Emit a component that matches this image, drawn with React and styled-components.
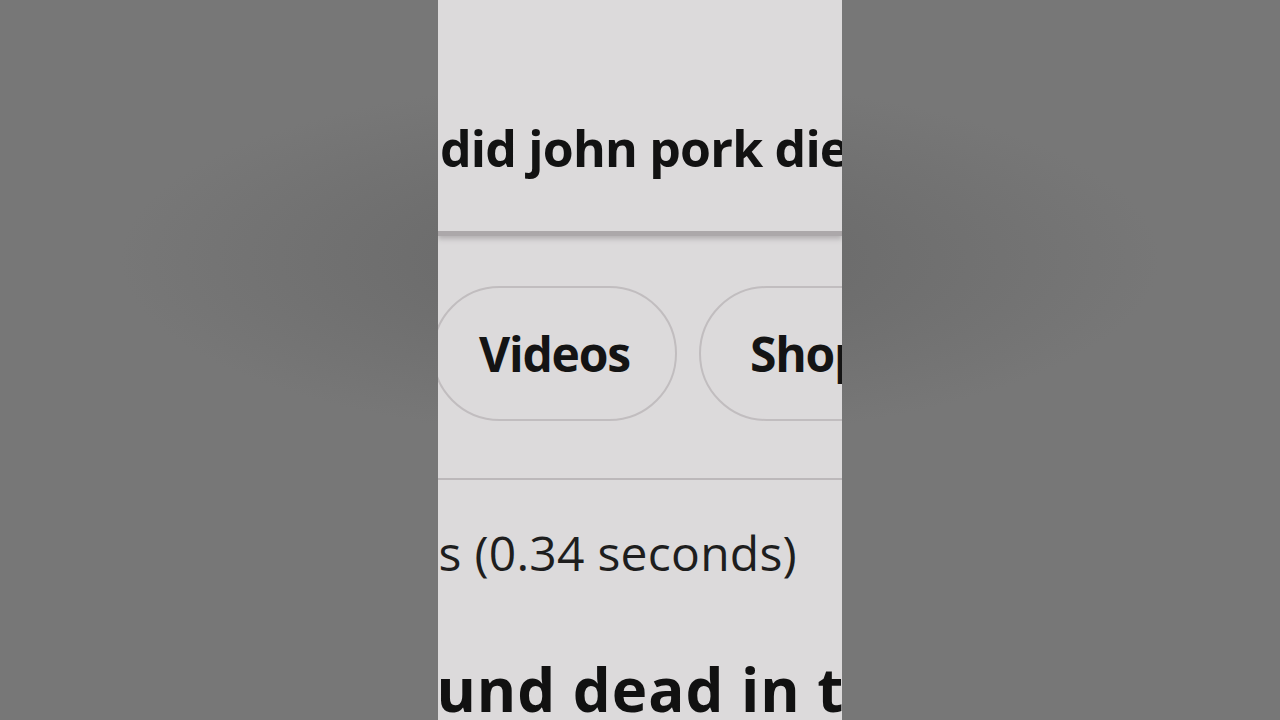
import styled, { createGlobalStyle } from "styled-components";

const GlobalStyle = createGlobalStyle`
  html, body {
    margin: 0;
    padding: 0;
    width: 100%;
    height: 100%;
    overflow: hidden;
  }
  body {
    font-family: "Open Sans", Lato, sans-serif;
  }
`;

const Stage = styled.div`
  width: 1280px;
  height: 720px;
  display: flex;
  justify-content: center;
  background: radial-gradient(
    ellipse 520px 180px at 50% 36%,
    #666667 0%,
    #6e6e6e 45%,
    #777777 100%
  );
`;

const Frame = styled.main`
  width: 404px;
  height: 720px;
  background: #dcdadb;
  overflow: hidden;
  display: flex;
  flex-direction: column;

  & > * {
    flex-shrink: 0;
  }
`;

const SearchBox = styled.div`
  height: 236px;
  padding: 116px 0 0 2px;
  box-sizing: border-box;
  border-bottom: 5px solid #aca8aa;
  box-shadow: 0 3px 5px rgba(120, 115, 118, 0.4);
`;

const Query = styled.h1`
  margin: 0;
  font-size: 50px;
  line-height: 64px;
  font-weight: 700;
  letter-spacing: -0.8px;
  color: #121212;
  white-space: nowrap;
`;

const ChipRow = styled.nav`
  display: flex;
  gap: 22px;
  padding: 50px 0 57px;
  margin-left: -6px;
  border-bottom: 2px solid #bcb8ba;
`;

const Chip = styled.div`
  flex-shrink: 0;
  height: 135px;
  box-sizing: border-box;
  border: 2px solid #c1bdbf;
  border-radius: 70px;
  display: flex;
  align-items: center;
  padding: 0 ${(p) => p.$pad}px;
  font-size: 48px;
  font-weight: 700;
  letter-spacing: -1.2px;
  color: #141414;
  white-space: nowrap;
`;

const Stats = styled.div`
  display: flex;
  justify-content: flex-end;
  padding: 45px 45px 0 0;
  font-size: 48px;
  line-height: 56px;
  font-weight: 500;
  letter-spacing: 0.25px;
  color: #1e1e1e;
  white-space: nowrap;
  overflow: hidden;
`;

const ResultTitle = styled.h2`
  margin: 72px 0 0 -64px;
  font-size: 60px;
  line-height: 72px;
  font-weight: 700;
  letter-spacing: 1px;
  color: #111111;
  white-space: nowrap;
`;

export default function App() {
  return (
    <>
      <GlobalStyle />
      <Stage>
        <Frame>
          <SearchBox>
            <Query>did john pork die</Query>
          </SearchBox>
          <ChipRow>
            <Chip $pad={45}>Videos</Chip>
            <Chip $pad={49}>Shopping</Chip>
          </ChipRow>
          <Stats>
            <span>About 1,240,000 results (0.34 seconds)</span>
          </Stats>
          <ResultTitle>found dead in the woods</ResultTitle>
        </Frame>
      </Stage>
    </>
  );
}
